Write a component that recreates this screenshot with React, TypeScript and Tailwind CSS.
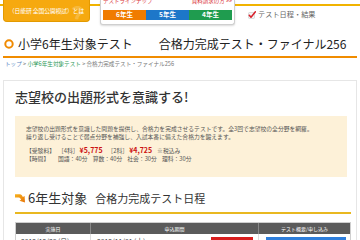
import React from 'react'

const jp = "font-['Noto_Sans_CJK_JP','Noto_Sans',sans-serif]"

function CheckIcon() {
  return (
    <svg width="8" height="8" viewBox="0 0 8 8">
      <rect x="0.5" y="1.5" width="6" height="6" rx="1" fill="#f4f4f4" stroke="#c8c8c8" strokeWidth="0.6" />
      <path d="M1.3 4.2 L3 6.2 L7.4 0.8" fill="none" stroke="#d8202a" strokeWidth="1.5" strokeLinecap="round" strokeLinejoin="round" />
    </svg>
  )
}

function RingIcon() {
  return (
    <svg width="10" height="10" viewBox="0 0 10 10">
      <circle cx="5" cy="5" r="3.7" fill="none" stroke="#f08a00" strokeWidth="2" />
    </svg>
  )
}

function ArrowIcon() {
  return (
    <svg width="11" height="10" viewBox="0 0 11 10">
      <defs>
        <linearGradient id="ag" x1="0" y1="0" x2="1" y2="1">
          <stop offset="0" stopColor="#f7b21c" />
          <stop offset="1" stopColor="#e8750a" />
        </linearGradient>
      </defs>
      <path d="M0 1.2 L4.6 1.2 Q6.2 1.2 7 2.6 L7.9 4.1 L9.6 3 L10 9.4 L4.4 7.8 L6.1 6.7 L5.2 5.2 Q4.7 4.4 3.8 4.4 L0 4.4 Z" fill="url(#ag)" />
    </svg>
  )
}

const tabs = [
  { label: '6年生', bg: 'bg-[#f07c00]' },
  { label: '5年生', bg: 'bg-[#1d77c9]' },
  { label: '4年生', bg: 'bg-[#1f9c4f]' },
]

export default function App() {
  return (
    <div className={`w-[360px] h-[240px] overflow-hidden bg-white text-[#333] ${jp}`}>
      {/* header */}
      <div className="relative h-[27px]">
        <div className="absolute left-0 right-0 top-[4px] h-[2px] bg-[#f1b300]" />
        <div className="relative flex items-start">
          <div className="relative ml-[3px] w-[87px] h-[22px] bg-[#f6a90f] border border-t-0 border-[#e39a00] rounded-b-[4px] flex items-center justify-center overflow-hidden">
            <span className="absolute right-[5px] top-[2px] text-[26px] leading-none font-bold text-white/20">?</span>
            <span className="relative text-[5.8px] leading-none text-white tracking-[-0.1px]">（日能研 全国公開模試）とは</span>
          </div>
          <div className="ml-[10px] w-[135px] h-[25px] bg-white border border-t-0 border-[#cfcfcf] rounded-b-[3px] shadow-[0_1px_2px_rgba(0,0,0,0.15)] px-[2px]">
            <div className="flex justify-between text-[5.5px] leading-[6px] text-[#d9343a] -mt-[2px] h-[12px]">
              <span>テストラインナップ</span>
              <span>資料請求の方 &gt;&gt;</span>
            </div>
            <div className="flex">
              {tabs.map((t) => (
                <div key={t.label} className={`flex-1 h-[10px] ${t.bg} flex items-center justify-center text-white text-[6.5px] font-bold`}>
                  {t.label}
                </div>
              ))}
            </div>
          </div>
          <div className="ml-[12px] mt-[11px] flex items-center gap-[2px] bg-white pl-[1px]">
            <CheckIcon />
            <span className="text-[7.2px] leading-none text-[#666]">テスト日程・結果</span>
          </div>
        </div>
      </div>

      {/* title */}
      <div className="mx-[3px] mt-[9px] pb-[4px] border-b-2 border-[#f08c00] flex items-center h-[22px]">
        <div className="ml-[1px] mr-[4px]">
          <RingIcon />
        </div>
        <h1 className="text-[12px] leading-[16px] text-[#222]">
          小学6年生対象テスト<span className="ml-[26px]">合格力完成テスト・ファイナル256</span>
        </h1>
      </div>

      {/* breadcrumb */}
      <div className="mt-[2px] px-[5px] text-[5.6px] leading-[8px] text-[#777]">
        <span className="text-[#5a87c5]">トップ</span> &gt; <span className="text-[#2f9a5a]">小学6年生対象テスト</span> &gt; 合格力完成テスト・ファイナル256
      </div>

      {/* card */}
      <div className="mx-[3px] mt-[12px] border border-[#e6e6e6] pl-[11px] pr-[5px] pt-[8px] pb-[10px]">
        <h2 className="text-[13px] leading-[16px] font-medium text-[#333]">志望校の出題形式を意識する!</h2>

        <div className="mt-[11px] mr-[4px] bg-[#fdf1d8] pl-[11px] pr-[6px] pt-[9px] pb-[15px] text-[5.8px] leading-[7.5px] text-[#555]">
          <p>志望校の出題形式を意識した問題を提供し、合格力を完成させるテストです。全3回で志望校の全分野を網羅。</p>
          <p>繰り返し受けることで弱点分野を補強し、入試本番に備えた合格力を鍛えます。</p>
          <p className="mt-[6px] leading-[8px] flex items-baseline">
            <span className="w-[32px]">【受験料】</span>
            <span>［4科］</span>
            <span className="ml-[1px] text-[7px] font-bold text-[#cc1111]">¥5,775</span>
            <span className="ml-[5px]">［2科］</span>
            <span className="ml-[1px] text-[7px] font-bold text-[#cc1111]">¥4,725</span>
            <span className="ml-[5px]">※税込み</span>
          </p>
          <p className="leading-[7px] flex">
            <span className="w-[32px]">【時間】</span>
            <span>国語：40分</span>
            <span className="ml-[5px]">算数：40分</span>
            <span className="ml-[5px]">社会：30分</span>
            <span className="ml-[5px]">理科：30分</span>
          </p>
        </div>

        {/* schedule */}
        <div className="mt-[13px] pb-[6px] border-b-2 border-[#e9b820] flex items-center h-[24px]">
          <div className="mr-[2px]">
            <ArrowIcon />
          </div>
          <span className="text-[13px] leading-[18px] text-[#333]">6年生対象</span>
          <span className="ml-[8px] text-[11px] leading-[18px] text-[#333]">合格力完成テスト日程</span>
        </div>

        <div className="mt-[8px] border border-[#cfcfcf]">
          <div className="grid grid-cols-[75px_168px_1fr] h-[11px] bg-[#5b5b5b] text-white text-[5px]">
            <div className="flex items-center justify-center border-r border-[#888]">実施日</div>
            <div className="flex items-center justify-center border-r border-[#888]">申込期間</div>
            <div className="flex items-center justify-center">テスト概要/申し込み</div>
          </div>
          <div className="grid grid-cols-[75px_168px_1fr] h-[20px] text-[6.8px] text-[#333]">
            <div className="pl-[5px] pt-[2px] border-r border-[#ddd]">2012/12/30 (日)</div>
            <div className="pl-[6px] pt-[2px] border-r border-[#ddd] flex items-start">
              <span>2012/11/01 (木)～</span>
              <div className="ml-auto mr-[5px] mt-[1px] w-[42px] h-[10px] bg-[#d81e1e]" />
            </div>
            <div className="pl-[7px] pr-[4px] pt-[3px]">
              <div className="h-[10px] bg-[#2f7fdc]" />
            </div>
          </div>
        </div>
      </div>
    </div>
  )
}
